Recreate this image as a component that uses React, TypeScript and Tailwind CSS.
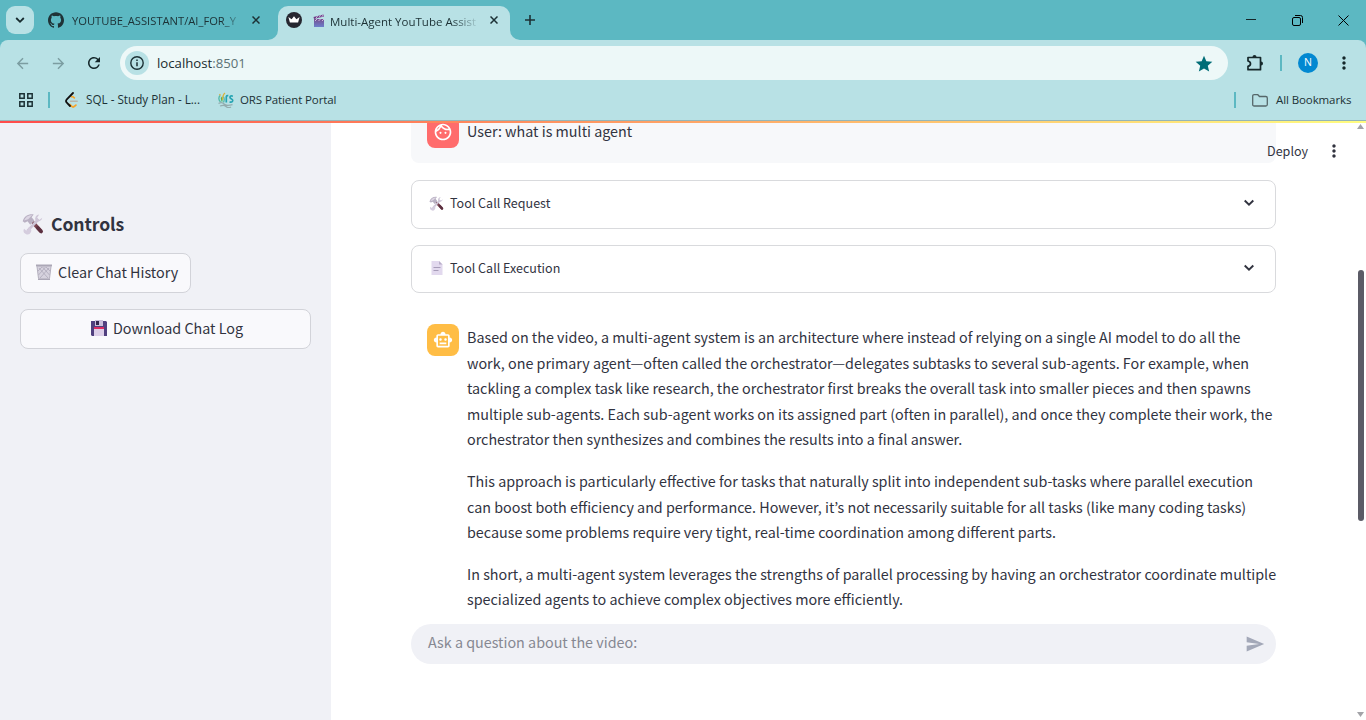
import type { ReactNode } from "react";
import {
  MdArrowBack,
  MdArrowForward,
  MdMoreVert,
  MdOutlineFace,
  MdOutlineSmartToy,
  MdRefresh,
  MdSend,
  MdStar,
} from "react-icons/md";
import { SiGithub } from "react-icons/si";

function ToolsIcon({ size }: { size: number }) {
  return (
    <svg width={size} height={size} viewBox="0 0 32 32" className="shrink-0">
      <path d="M17 15 L27 26" stroke="#7a4450" strokeWidth="5.500" strokeLinecap="round" />
      <path d="M23 21.500 L28 27" stroke="#5c3040" strokeWidth="5" strokeLinecap="round" />
      <path d="M8 26 L24 9" stroke="#cdc4d6" strokeWidth="4" />
      <path d="M3 23 a5.500 5.500 0 1 0 7 -2.500 l-1 4 -3 1z" fill="#d5cdde" />
      <path d="M29.500 7 l-4.500 3 -3 -3 3 -5 a6 6 0 0 0 -5 9 a6 6 0 0 0 9.500 -4z" fill="#cfc7d8" />
      <path d="M1 12 C3 5 9 1 17 2 L14 6 L18 11 L12 17 L8 12 L4 14z" fill="#b9b1c3" />
      <path d="M3 11 C5 6 9 3 15 3 L9 9z" fill="#ddd6e4" />
    </svg>
  );
}

function BinIcon() {
  return (
    <svg width="18" height="18" viewBox="0 0 18 18" className="shrink-0">
      <path d="M2 3h14l-1.500 13h-11z" fill="#d6d2de" />
      <path d="M4 5l9 10M7.500 4l7 8M11 4l4 4M14 5l-9 10M10.500 4l-7 8M7 4L3 8" stroke="#a8a4b4" strokeWidth=".7" />
      <path d="M1 1.500h16v2H1zM3 15.500h12v1.500H3z" fill="#aba7b6" />
      <path d="M2 3.500l1.500 12M16 3.500l-1.500 12" stroke="#b4b0be" />
    </svg>
  );
}

function FloppyIcon() {
  return (
    <svg width="16" height="16" viewBox="0 0 16 16" className="shrink-0">
      <path d="M0 1h15l1 1v14H1l-1-1z" fill="#50407f" />
      <path d="M4 0h8v6H4z" fill="#c9bfdc" />
      <path d="M5 1h3v4H5z" fill="#33264f" />
      <path d="M3 7h10v9H3z" fill="#dccfe8" />
      <path d="M3 7h10v2H3z" fill="#dc2c62" />
    </svg>
  );
}

function PageIcon() {
  return (
    <svg width="12" height="14" viewBox="0 0 12 14" className="shrink-0">
      <path d="M.5 0H8l3.500 3.500V14H.5z" fill="#e2d9ee" />
      <path d="M8 0l3.500 3.500H8z" fill="#b9aeca" />
      <path d="M2.500 6.500h7M2.500 9.500h5" stroke="#a79cb9" />
    </svg>
  );
}

function ClapperIcon() {
  return (
    <svg width="12" height="13" viewBox="0 0 12 13" className="shrink-0">
      <defs>
        <linearGradient id="clap" x1="0" y1="0" x2="0" y2="1">
          <stop offset="0" stopColor="#75508f" />
          <stop offset="1" stopColor="#6c7ecb" />
        </linearGradient>
      </defs>
      <path d="M1 5h10v8H1z" fill="url(#clap)" />
      <path d="M.5 3L10.500 .5l.5 2L1 5z" fill="#6d3b86" />
      <path d="M3 4.300l1.500-2.200M6 3.500l1.500-2.200M8.800 2.800l1.500-2M2 7l2-2M5.500 7l2-2M9 7l2-2" stroke="#d9c6e8" strokeWidth=".9" />
    </svg>
  );
}

function CrownIcon() {
  return (
    <svg width="16" height="16" viewBox="0 0 16 16" className="shrink-0">
      <circle cx="8" cy="8" r="8" fill="#262730" />
      <path d="M2.400 5l3.200 2.200L8 4.200l2.400 3L13.600 5l-1.500 5.600H3.900z" fill="#fff" />
    </svg>
  );
}

function LeetIcon() {
  return (
    <svg width="16" height="16" viewBox="0 0 16 16" fill="none" className="shrink-0">
      <path d="M10.800 6.300L9.500 5.200a1.800 1.800 0 0 0-2.500 0" stroke="#f5a32a" strokeWidth="1.700" />
      <path d="M6 12.500l1.500 1.700a2.300 2.300 0 0 0 3.200 0l1.200-1.100" stroke="#f5a32a" strokeWidth="1.800" strokeLinecap="round" />
      <path d="M9 1L2.800 7.400a2.400 2.400 0 0 0 0 3.300L6 14" stroke="#111" strokeWidth="1.800" strokeLinecap="round" />
      <path d="M6.500 9.200h6.700" stroke="#b9b4a8" strokeWidth="1.500" strokeLinecap="round" />
    </svg>
  );
}

function OrsIcon() {
  return (
    <svg width="16" height="16" viewBox="0 0 16 16" fill="none" className="shrink-0">
      <path d="M2 3.500Q-.5 7 2.500 10M5.500 10.500Q7 7 5.300 4.500" stroke="#55b9a9" strokeWidth="1.300" />
      <path d="M4 10.500Q2 7 3 4.500 5.500 7 4 10.500z" fill="#4cae52" />
      <path d="M4.500 8Q4.500 3 7 1M1.500 2l1 1.500" stroke="#d9b23b" strokeWidth="1.300" />
      <path d="M8.300 10.500V4.500q.3-1 2-.8M14.900 4.200q-2.900-.8-2.900 1.100 0 1 1.500 1.700 1.500.7 1.100 2-.6 1.700-3 .9" stroke="#25a4b2" strokeWidth="1.700" />
      <path d="M.5 11.500q3.500-1.800 5.500.5t8.500.7M2 14q4-1.500 6 .5t5 .5" stroke="#93acae" strokeWidth="1.300" />
    </svg>
  );
}

function Chevron() {
  return (
    <svg width="12" height="8" viewBox="0 0 12 8" fill="none" className="mb-px shrink-0">
      <path d="M1.700 1.500L6 5.700l4.300-4.200" stroke="#31333f" strokeWidth="1.900" />
    </svg>
  );
}

function Cross() {
  return (
    <svg width="8" height="8" viewBox="0 0 8 8" className="shrink-0">
      <path d="M.5.5l7 7M7.500.5l-7 7" stroke="#1c3135" strokeWidth="1.500" />
    </svg>
  );
}

function Flare({ flip = false }: { flip?: boolean }) {
  return (
    <svg width="10" height="10" viewBox="0 0 10 10" className={flip ? "-scale-x-100" : ""}>
      <path d="M10 0v10H0A10 10 0 0 0 10 0z" fill="#b8e1e5" />
    </svg>
  );
}

function TabStrip() {
  return (
    <div className="flex h-10 bg-[#5cb8c2]">
      <div className="mt-1.5 ml-1.5 flex h-7 w-7 items-center justify-center rounded-[9px] bg-[#b8e1e5]">
        <svg width="10" height="7" viewBox="0 0 10 7" fill="none">
          <path d="M1.200 1L5 4.800 8.800 1" stroke="#172b2e" strokeWidth="1.800" />
        </svg>
      </div>
      <div className="ml-3.5 flex w-[220px] items-center">
        <SiGithub size={16} color="#1f3337" />
        <div className="ml-2 w-[168px] whitespace-nowrap pb-0.5 [mask-image:linear-gradient(to_right,black_150px,transparent_172px)]">
          <span className="text-[11.2px] text-[#1c3135]">YOUTUBE_ASSISTANT/AI_FOR_Y</span>
        </div>
        <div className="ml-3">
          <Cross />
        </div>
      </div>
      <div className="flex items-end">
        <Flare />
      </div>
      <div className="mt-1.5 flex w-[232px] items-center rounded-t-[10px] bg-[#b8e1e5] pb-1.5 pl-2">
        <CrownIcon />
        <div className="ml-[11px]">
          <ClapperIcon />
        </div>
        <div className="ml-[5px] w-[147px] whitespace-nowrap pb-px [mask-image:linear-gradient(to_right,black_122px,transparent_150px)]">
          <span className="text-[11.5px] text-[#1c3135]">Multi-Agent YouTube Assist</span>
        </div>
        <div className="ml-[13px]">
          <Cross />
        </div>
      </div>
      <div className="flex items-end">
        <Flare flip />
      </div>
      <div className="ml-1 flex flex-1 items-center">
        <svg width="12" height="12" viewBox="0 0 12 12">
          <path d="M6 1v10M1 6h10" stroke="#1c3135" strokeWidth="1.600" />
        </svg>
      </div>
      <div className="flex items-center gap-[35px] pr-[17px]">
        <svg width="10" height="10" viewBox="0 0 10 10" className="mr-px">
          <path d="M0 4.500h10" stroke="#142528" />
        </svg>
        <svg width="11" height="11" viewBox="0 0 11 11" fill="none">
          <rect x=".5" y="2.500" width="8" height="8" rx="1.500" stroke="#000" />
          <path d="M3 .5h5.500a2 2 0 0 1 2 2V8" stroke="#000" />
        </svg>
        <svg width="11" height="11" viewBox="0 0 11 11">
          <path d="M.5.5l10 10M10.500.5l-10 10" stroke="#000" />
        </svg>
      </div>
    </div>
  );
}

function AddressRow() {
  return (
    <div className="flex h-[46px] items-center">
      <MdArrowBack size={17} color="#7b9da1" className="ml-3.5" />
      <MdArrowForward size={17} color="#7b9da1" className="ml-[18.5px]" />
      <MdRefresh size={18} color="#14272a" className="ml-[18.5px]" />
      <div className="ml-[17px] flex h-[34px] w-[1108px] items-center rounded-full bg-[#edf8f8] pl-[5px]">
        <div className="flex h-6 w-6 items-center justify-center rounded-full bg-[#b8e1e5]">
          <svg width="14" height="14" viewBox="0 0 14 14" fill="none">
            <circle cx="7" cy="7" r="6.200" stroke="#1c3135" strokeWidth="1.400" />
            <path d="M7 6.200v4M7 3.500v1.500" stroke="#1c3135" strokeWidth="1.500" />
          </svg>
        </div>
        <span className="ml-2 pt-0.5 text-[13.2px] text-[#1a2c2f]">
          localhost<span className="text-[#5c7275]">:8501</span>
        </span>
        <div className="flex flex-1 justify-end pr-3.5 pt-0.5">
          <MdStar size={20} color="#006d77" />
        </div>
      </div>
      <svg width="18" height="18" viewBox="0 0 18 18" fill="none" className="ml-[18px]">
        <path d="M2 3.500h12.500v12.200H2v-3.400q2.500-.6 2.500-2.600T2 7z" stroke="#16282b" strokeWidth="1.700" strokeLinejoin="round" />
        <path d="M6.500 3a2 2 0 0 1 4 0zM15 7.500a2 2 0 0 1 0 4z" fill="#16282b" />
      </svg>
      <div className="ml-4 h-4 w-0.5 bg-[#5cb8c2]" />
      <div className="ml-4 flex h-5 w-5 items-center justify-center rounded-full bg-[#0288d1] text-[10.500px] text-white">N</div>
      <MdMoreVert size={20} color="#14272a" className="ml-4" />
    </div>
  );
}

function BookmarkRow() {
  return (
    <div className="flex h-[35px] items-start border-b border-[#94b5b8]">
      <div className="flex h-7 w-full items-center">
        <svg width="14" height="14" viewBox="0 0 14 14" fill="none" className="ml-[19px]">
          <path d="M.8.8h4.400v4.400H.8zM8.800.8h4.400v4.400H8.800zM.8 8.800h4.400v4.400H.8zM8.800 8.800h4.400v4.400H8.800z" stroke="#1c3135" strokeWidth="1.500" />
        </svg>
        <div className="ml-[15px] h-4 w-0.5 bg-[#5cb8c2]" />
        <div className="ml-3.5 flex items-center">
          <LeetIcon />
          <span className="ml-1.5 w-[114px] whitespace-nowrap text-[11.7px] text-[#1c3135]">SQL - Study Plan - L...</span>
        </div>
        <div className="ml-[18px] flex items-center">
          <OrsIcon />
          <span className="ml-1.5 whitespace-nowrap text-[11.5px] tracking-[-0.1px] text-[#1c3135]">ORS Patient Portal</span>
        </div>
        <div className="flex flex-1 items-center justify-end pr-[15px]">
          <div className="h-4 w-0.5 bg-[#5cb8c2]" />
          <svg width="16" height="13" viewBox="0 0 16 13" fill="none" className="ml-4">
            <path d="M.7 2.200q0-1.500 1.500-1.500h3.600l1.700 1.800h6.300q1.500 0 1.500 1.500v6.500q0 1.500-1.500 1.500H2.200q-1.500 0-1.500-1.500z" stroke="#56676a" strokeWidth="1.300" />
          </svg>
          <span className="ml-2 w-[75px] whitespace-nowrap text-[11.5px] tracking-[-0.1px] text-[#1c3135]">All Bookmarks</span>
        </div>
      </div>
    </div>
  );
}

function Sidebar() {
  return (
    <aside className="flex w-[331px] flex-col bg-[#f0f1f6] px-5 pt-[87px]">
      <h2 className="ml-0.5 flex h-8 items-center text-[17.6px] font-bold tracking-[-0.1px] text-[#31333f]">
        <ToolsIcon size={22} />
        <span className="ml-[7px]">Controls</span>
      </h2>
      <button className="mt-[13px] flex h-10 w-[171px] items-center rounded-lg border border-[#d2d3d9] bg-[#f9f9fc] pb-0.5 pl-3.5">
        <BinIcon />
        <span className="ml-[5px] whitespace-nowrap pb-px">Clear Chat History</span>
      </button>
      <button className="mt-4 flex h-10 w-[291px] items-center rounded-lg border border-[#d2d3d9] bg-[#f9f9fc] pb-0.5 pl-[70px]">
        <FloppyIcon />
        <span className="ml-1.5 whitespace-nowrap pb-px">Download Chat Log</span>
      </button>
    </aside>
  );
}

function Expander({ icon, label, className }: { icon: ReactNode; label: string; className: string }) {
  return (
    <div className={`flex items-center rounded-lg border border-[#d9dadd] pb-0.5 pl-[17px] pr-5 text-[12.53px] ${className}`}>
      <div className="flex w-[21px] items-center">{icon}</div>
      <span className="flex-1">{label}</span>
      <Chevron />
    </div>
  );
}

function Paragraph({ lines }: { lines: string[] }) {
  return (
    <p>
      {lines.map((line) => (
        <span key={line} className="block whitespace-nowrap">
          {line}
        </span>
      ))}
    </p>
  );
}

const answer = [
  [
    "Based on the video, a multi-agent system is an architecture where instead of relying on a single AI model to do all the",
    "work, one primary agent—often called the orchestrator—delegates subtasks to several sub-agents. For example, when",
    "tackling a complex task like research, the orchestrator first breaks the overall task into smaller pieces and then spawns",
    "multiple sub-agents. Each sub-agent works on its assigned part (often in parallel), and once they complete their work, the",
    "orchestrator then synthesizes and combines the results into a final answer.",
  ],
  [
    "This approach is particularly effective for tasks that naturally split into independent sub-tasks where parallel execution",
    "can boost both efficiency and performance. However, it’s not necessarily suitable for all tasks (like many coding tasks)",
    "because some problems require very tight, real-time coordination among different parts.",
  ],
  [
    "In short, a multi-agent system leverages the strengths of parallel processing by having an orchestrator coordinate multiple",
    "specialized agents to achieve complex objectives more efficiently.",
  ],
];

function Chat() {
  return (
    <main className="flex w-[865px] flex-col">
      <div className="flex h-[42px] items-start overflow-hidden rounded-b-lg bg-[#f7f8fa] pl-4">
        <div className="-mt-[5px] flex h-8 w-8 shrink-0 items-center justify-center rounded-lg bg-[#ff6c6c]">
          <MdOutlineFace size={20} color="#fff" />
        </div>
        <p className="-mt-[3px] ml-2 leading-[25.6px]">User: what is multi agent</p>
      </div>
      <Expander className="mt-[17px] h-[49px]" icon={<ToolsIcon size={15} />} label="Tool Call Request" />
      <Expander className="mt-4 h-12" icon={<span className="ml-0.5"><PageIcon /></span>} label="Tool Call Execution" />
      <div className="mt-8 flex h-[299px] pl-4">
        <div className="-mt-[0.6px] flex h-8 w-8 shrink-0 items-center justify-center rounded-lg bg-[#ffbd45]">
          <MdOutlineSmartToy size={20} color="#fff" />
        </div>
        <div className="-mt-px ml-2 flex flex-col gap-4 leading-[25.6px]">
          {answer.map((lines) => (
            <Paragraph key={lines[0]} lines={lines} />
          ))}
        </div>
      </div>
      <div className="flex h-10 items-center rounded-full bg-[#f0f1f6] pl-[17px] pr-[11px]">
        <span className="flex-1 pb-1 text-[#868892]">Ask a question about the video:</span>
        <MdSend size={20} color="#a3a8b8" />
      </div>
    </main>
  );
}

export default function App() {
  return (
    <div className="flex h-[720px] w-[1366px] flex-col overflow-hidden bg-white">
      <header className="bg-[#5cb8c2] font-['Open_Sans','Noto_Sans',sans-serif]">
        <TabStrip />
        <div className="rounded-t-[8px] bg-[#b8e1e5]">
          <AddressRow />
          <BookmarkRow />
        </div>
      </header>
      <div className="relative flex flex-1 font-['Noto_Sans_CJK_KR',sans-serif] text-[14.335px] text-[#31333f]">
        <Sidebar />
        <div className="w-20" />
        <Chat />
        <div className="flex flex-1 flex-col items-end justify-between pb-[3px] pr-0.5 pt-[3px]">
          <svg width="7" height="5" viewBox="0 0 7 5">
            <path d="M0 5L3.500 0 7 5z" fill="#a3a3a8" />
          </svg>
          <div className="mb-[51px] h-[251px] w-1.5 rounded-full bg-[#5b5b66]" />
          <svg width="7" height="5" viewBox="0 0 7 5">
            <path d="M0 0l3.500 5L7 0z" fill="#a3a3a8" />
          </svg>
        </div>
        <div className="absolute inset-x-0 top-0 h-0.5 bg-[linear-gradient(to_right,#ff4b4b,#fffd80)]" />
        <div className="absolute right-[22px] top-[19px] flex h-[22px] items-center text-[12.53px] leading-5">
          <span className="pb-px">Deploy</span>
          <MdMoreVert size={20} className="ml-4" />
        </div>
      </div>
    </div>
  );
}
